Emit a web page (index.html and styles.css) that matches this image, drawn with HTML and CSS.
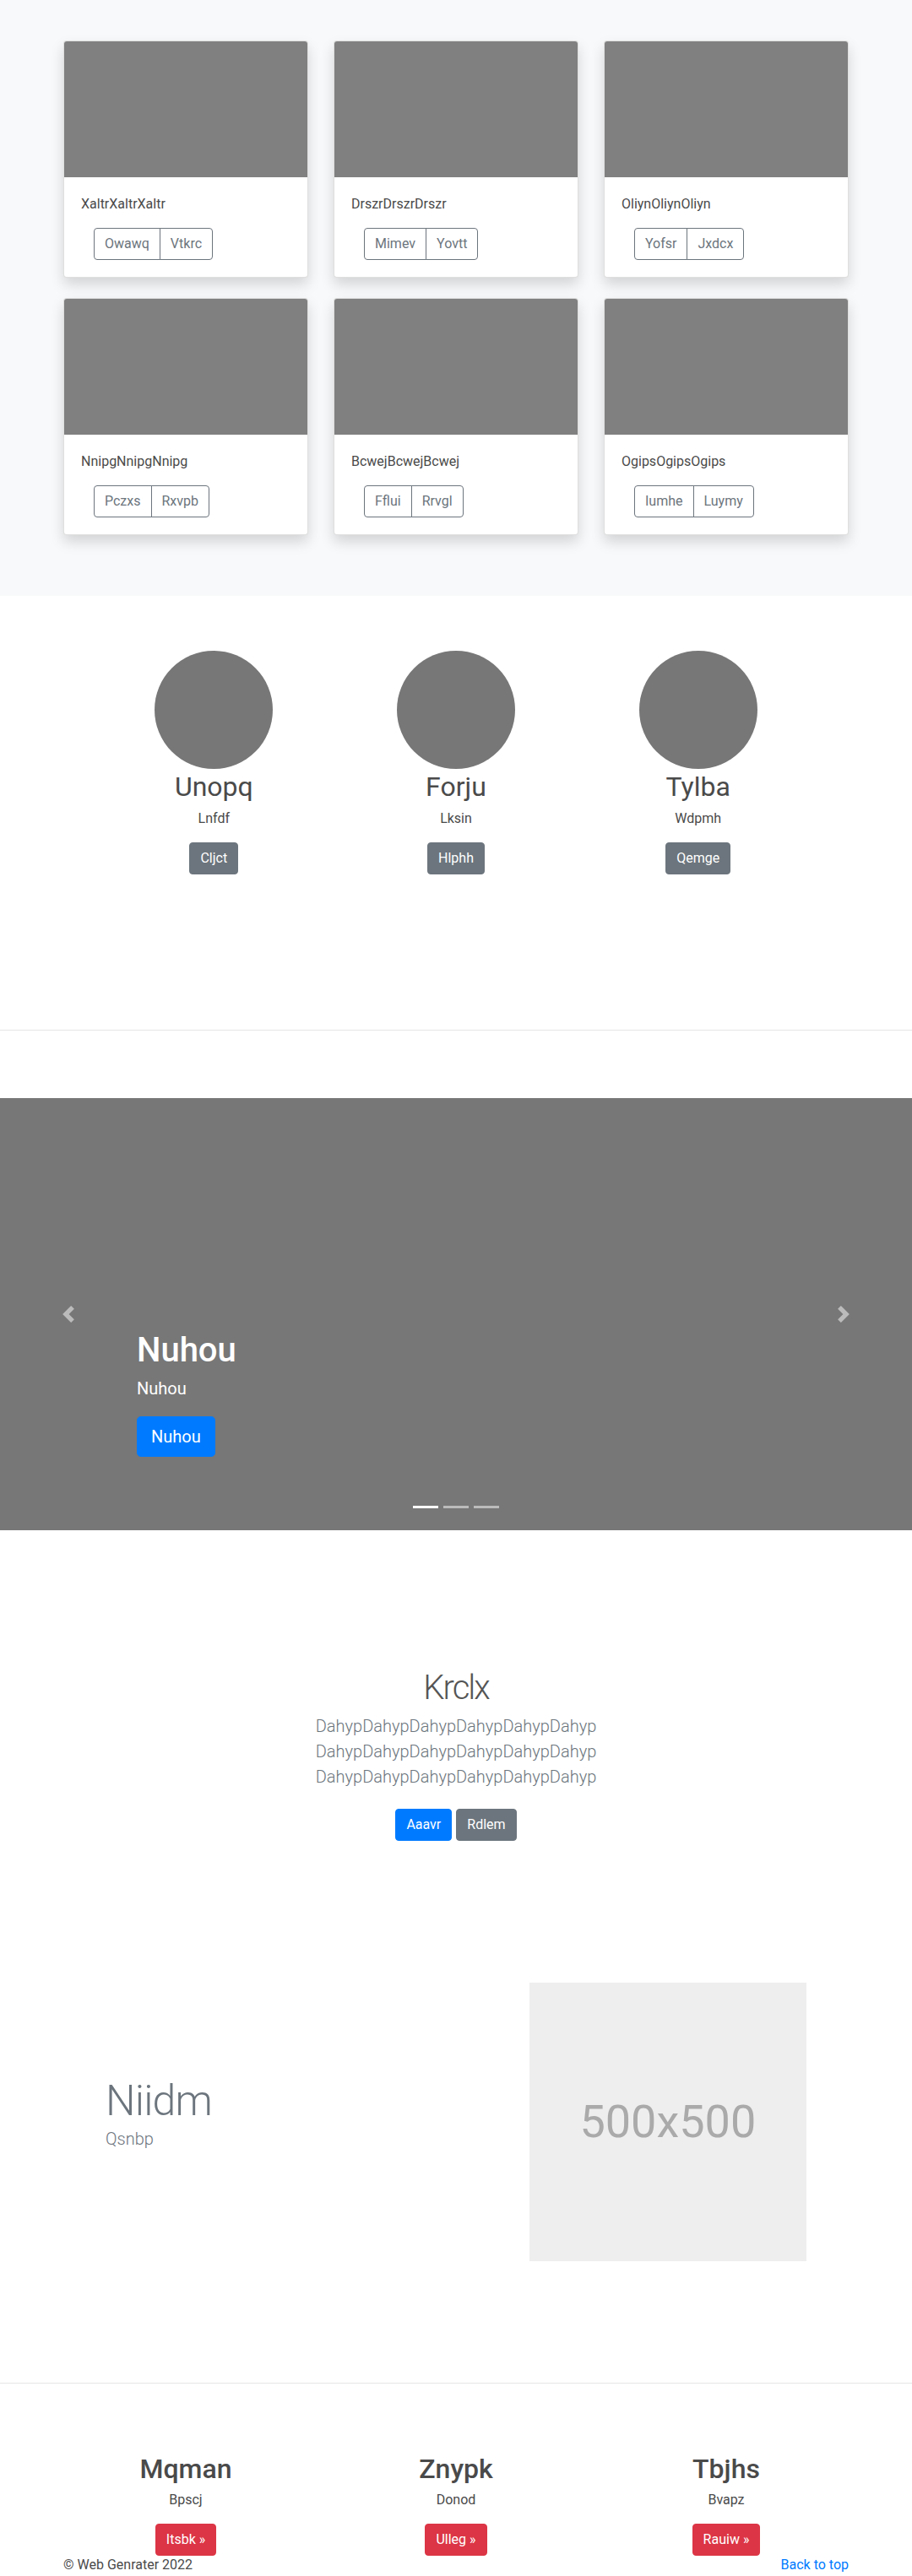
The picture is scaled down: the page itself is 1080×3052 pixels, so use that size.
FILE: index.html
```html
<!DOCTYPE html>
<html lang="en">
<head>
<meta charset="utf-8">
<title>Album</title>
<link rel="stylesheet" href="styles.css">
</head>
<body>
<section class="album">
  <div class="album-grid">
    <div class="card">
      <div class="card-img"></div>
      <div class="card-body">
        <p class="card-text">XaltrXaltrXaltr</p>
        <div class="btn-group"><a class="btn-o">Owawq</a><a class="btn-o">Vtkrc</a></div>
      </div>
    </div>
    <div class="card">
      <div class="card-img"></div>
      <div class="card-body">
        <p class="card-text">DrszrDrszrDrszr</p>
        <div class="btn-group"><a class="btn-o">Mimev</a><a class="btn-o">Yovtt</a></div>
      </div>
    </div>
    <div class="card">
      <div class="card-img"></div>
      <div class="card-body">
        <p class="card-text">OliynOliynOliyn</p>
        <div class="btn-group"><a class="btn-o">Yofsr</a><a class="btn-o">Jxdcx</a></div>
      </div>
    </div>
    <div class="card">
      <div class="card-img"></div>
      <div class="card-body">
        <p class="card-text">NnipgNnipgNnipg</p>
        <div class="btn-group"><a class="btn-o">Pczxs</a><a class="btn-o">Rxvpb</a></div>
      </div>
    </div>
    <div class="card">
      <div class="card-img"></div>
      <div class="card-body">
        <p class="card-text">BcwejBcwejBcwej</p>
        <div class="btn-group"><a class="btn-o">Fflui</a><a class="btn-o">Rrvgl</a></div>
      </div>
    </div>
    <div class="card">
      <div class="card-img"></div>
      <div class="card-body">
        <p class="card-text">OgipsOgipsOgips</p>
        <div class="btn-group"><a class="btn-o">Iumhe</a><a class="btn-o">Luymy</a></div>
      </div>
    </div>
  </div>
</section>

<section class="marketing">
  <div class="mk-col">
    <div class="circle"></div>
    <h2 class="mk-title">Unopq</h2>
    <p class="mk-text">Lnfdf</p>
    <a class="btn btn-secondary">Cljct</a>
  </div>
  <div class="mk-col">
    <div class="circle"></div>
    <h2 class="mk-title">Forju</h2>
    <p class="mk-text">Lksin</p>
    <a class="btn btn-secondary">Hlphh</a>
  </div>
  <div class="mk-col">
    <div class="circle"></div>
    <h2 class="mk-title">Tylba</h2>
    <p class="mk-text">Wdpmh</p>
    <a class="btn btn-secondary">Qemge</a>
  </div>
</section>

<hr class="divider divider-1">

<section class="carousel">
  <div class="caption">
    <h1>Nuhou</h1>
    <p>Nuhou</p>
    <a class="btn btn-lg btn-primary">Nuhou</a>
  </div>
  <a class="ctrl ctrl-prev"><svg viewBox="0 0 8 8" fill="#fff"><path d="M5.25 0l-4 4 4 4 1.5-1.5L4.25 4l2.5-2.5L5.25 0z"/></svg></a>
  <a class="ctrl ctrl-next"><svg viewBox="0 0 8 8" fill="#fff"><path d="M2.75 0l-1.5 1.5L3.75 4l-2.5 2.5L2.75 8l4-4-4-4z"/></svg></a>
  <ol class="indicators"><li class="active"></li><li></li><li></li></ol>
</section>

<section class="jumbo">
  <h1>Krclx</h1>
  <p class="lead">DahypDahypDahypDahypDahypDahyp DahypDahypDahypDahypDahypDahyp DahypDahypDahypDahypDahypDahyp</p>
  <div class="jumbo-btns"><a class="btn btn-primary">Aaavr</a><a class="btn btn-secondary">Rdlem</a></div>
</section>

<section class="featurette">
  <div class="feat-text">
    <h2 class="feat-heading">Niidm</h2>
    <p class="lead">Qsnbp</p>
  </div>
  <div class="feat-media">
    <div class="placeholder">500x500</div>
  </div>
</section>

<hr class="divider divider-2">

<section class="bottom">
  <div class="b-col">
    <h2 class="b-title">Mqman</h2>
    <p class="b-text">Bpscj</p>
    <a class="btn btn-danger">Itsbk &raquo;</a>
  </div>
  <div class="b-col">
    <h2 class="b-title">Znypk</h2>
    <p class="b-text">Donod</p>
    <a class="btn btn-danger">Ulleg &raquo;</a>
  </div>
  <div class="b-col">
    <h2 class="b-title">Tbjhs</h2>
    <p class="b-text">Bvapz</p>
    <a class="btn btn-danger">Rauiw &raquo;</a>
  </div>
</section>

<footer class="footer">
  <p>&copy; Web Genrater 2022</p>
  <a class="top-link">Back to top</a>
</footer>
</body>
</html>
```

FILE: styles.css
```css
* { box-sizing: border-box; }
html, body { margin: 0; padding: 0; }
body {
  font-family: Roboto, "Liberation Sans", Arial, sans-serif;
  font-size: 16px;
  line-height: 24px;
  color: #444;
  background: #fff;
}
p, h1, h2 { margin: 0; }
a { text-decoration: none; }

/* album */
.album { background: #f8f9fa; padding: 48px 0 72px; }
.album-grid {
  width: 930px;
  margin: 0 auto;
  display: grid;
  grid-template-columns: repeat(3, 290px);
  column-gap: 30px;
  row-gap: 24px;
}
.card {
  background: #fff;
  border: 1px solid rgba(0,0,0,.125);
  border-radius: 4px;
  overflow: hidden;
  box-shadow: 0 8px 16px rgba(0,0,0,.15);
}
.card-img { height: 161px; background: #808080; }
.card-body { padding: 20px; }
.card-text { margin-bottom: 16px; color: #4a4a4a; }
.btn-group { display: inline-flex; margin-left: 15px; }
.btn-o {
  display: block;
  padding: 6px 12px;
  border: 1px solid #6c757d;
  color: #6c757d;
  font-size: 16px;
  line-height: 24px;
}
.btn-o:first-child { border-radius: 4px 0 0 4px; }
.btn-o + .btn-o { margin-left: -1px; border-radius: 0 4px 4px 0; }

/* buttons */
.btn {
  display: inline-block;
  padding: 6px 12px;
  border: 1px solid transparent;
  border-radius: 4px;
  font-size: 16px;
  line-height: 24px;
  color: #fff;
}
.btn-secondary { background: #6c757d; border-color: #6c757d; }
.btn-primary { background: #007bff; border-color: #007bff; }
.btn-danger { background: #dc3545; border-color: #dc3545; }
.btn-lg { font-size: 20px; line-height: 30px; padding: 8px 16px; border-radius: 4.8px; }

/* marketing */
.marketing {
  width: 860px;
  margin: 0 auto;
  padding-top: 65px;
  display: grid;
  grid-template-columns: repeat(3, 1fr);
  text-align: center;
}
.mk-col { display: flex; flex-direction: column; align-items: center; }
.circle { width: 140px; height: 140px; border-radius: 50%; background: #777; }
.mk-title { font-size: 32px; line-height: 38.4px; font-weight: 400; color: #4a4a4a; margin: 2px 0 7px; }
.mk-text { margin-bottom: 15.5px; color: #4a4a4a; }

.divider { height: 0; border: 0; border-top: 1px solid rgba(0,0,0,.1); }
.divider-1 { margin: 184px 0 80px; }
.divider-2 { margin: 144px 0 82.5px; }

/* carousel */
.carousel { position: relative; height: 512px; background: #777; }
.caption { position: absolute; left: 15%; top: 275px; color: #fff; }
.caption h1 { font-size: 40px; line-height: 48px; font-weight: 500; margin-bottom: 6px; }
.caption p { font-size: 20px; line-height: 30px; margin-bottom: 18px; }
.ctrl {
  position: absolute;
  top: 0;
  bottom: 0;
  width: 15%;
  display: flex;
  align-items: center;
  justify-content: center;
  opacity: .5;
}
.ctrl-prev { left: 0; }
.ctrl-next { right: 0; }
.ctrl svg { width: 20px; height: 20px; display: block; }
.indicators {
  position: absolute;
  left: 0;
  right: 0;
  bottom: 16px;
  display: flex;
  justify-content: center;
  margin: 0;
  padding: 0;
  list-style: none;
}
.indicators li {
  box-sizing: content-box;
  width: 30px;
  height: 3px;
  border-top: 10px solid transparent;
  border-bottom: 10px solid transparent;
  background: #fff;
  background-clip: padding-box;
  margin: 0 3px;
  opacity: .5;
}
.indicators li.active { opacity: 1; }

/* jumbotron */
.jumbo { text-align: center; padding-top: 162.6px; }
.jumbo h1 { font-size: 40px; line-height: 48px; font-weight: 300; letter-spacing: -2px; color: #555; margin-bottom: 6.3px; }
.lead { font-size: 20px; line-height: 30px; font-weight: 300; color: #6c757d; }
.jumbo .lead { max-width: 450px; margin: 0 auto 22.8px; }
.jumbo-btns { display: flex; justify-content: center; gap: 5px; }

/* featurette */
.featurette {
  width: 860px;
  margin: 168.3px auto 0;
  display: grid;
  grid-template-columns: 7fr 5fr;
  align-items: center;
}
.feat-text, .feat-media { padding: 0 15px; }
.feat-heading {
  font-size: 50px;
  line-height: 1;
  font-weight: 300;
  letter-spacing: -0.8px;
  color: #6c757d;
  margin-bottom: 5px;
}
.feat-text .lead { margin-bottom: 14px; }
.placeholder {
  height: 330px;
  background: #eee;
  color: #aaa;
  font-size: 54px;
  line-height: 1;
  display: flex;
  align-items: center;
  justify-content: center;
}

/* bottom columns */
.bottom {
  width: 960px;
  margin: 0 auto;
  display: grid;
  grid-template-columns: repeat(3, 1fr);
  text-align: center;
}
.b-col { padding: 0 15px; display: flex; flex-direction: column; align-items: center; }
.b-title { font-size: 32px; line-height: 38.4px; font-weight: 500; color: #4a4a4a; margin-bottom: 5.3px; }
.b-text { margin-bottom: 16.3px; color: #4a4a4a; }

/* footer */
.footer {
  width: 930px;
  margin: -1px auto 0;
  display: flex;
  justify-content: space-between;
  line-height: 24px;
  color: #4a4a4a;
}
.top-link { color: #007bff; }
```
